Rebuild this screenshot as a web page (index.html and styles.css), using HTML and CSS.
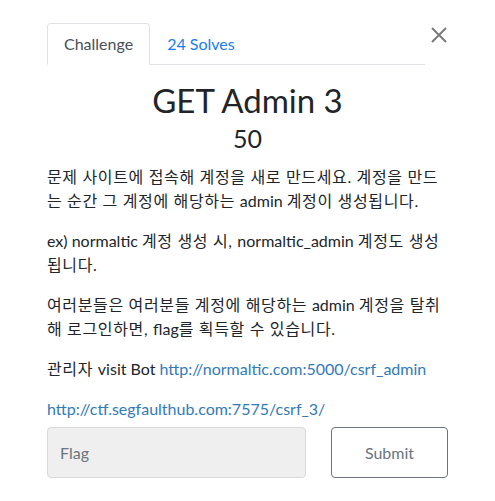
FILE: index.html
```html
<!DOCTYPE html>
<html lang="ko">
<head>
<meta charset="utf-8">
<link rel="stylesheet" href="styles.css">
</head>
<body>
<div class="modal">
  <div class="header">
    <ul class="tabs">
      <li class="tab active">Challenge</li>
      <li class="tab link">24 Solves</li>
    </ul>
    <button class="close" aria-label="Close">
      <svg width="16" height="16" viewBox="0 0 16 16"><path d="M1 1L15 15M15 1L1 15" stroke="#7a7a7a" stroke-width="2"/></svg>
    </button>
  </div>
  <h2 class="title">GET Admin 3</h2>
  <h3 class="value">50</h3>
  <div class="desc">
    <p><span class="ko">문제 사이트에 접속해 계정을 새로 만드세요. 계정을 만드는 순간 그 계정에 해당하는 </span>admin <span class="ko">계정이 생성됩니다.</span></p>
    <p>ex) normaltic <span class="ko">계정 생성 시, </span>normaltic_admin <span class="ko">계정도 생성됩니다.</span></p>
    <p><span class="ko">여러분들은 여러분들 계정에 해당하는 </span>admin <span class="ko">계정을 탈취해 로그인하면, </span>flag<span class="ko">를 획득할 수 있습니다.</span></p>
    <p><span class="ko">관리자 </span>visit Bot <a href="#">http://normaltic.com:5000/csrf_admin</a></p>
    <p><a href="#">http://ctf.segfaulthub.com:7575/csrf_3/</a></p>
  </div>
  <form class="submit-row">
    <input class="flag" type="text" placeholder="Flag">
    <button class="submit" type="button">Submit</button>
  </form>
</div>
</body>
</html>
```

FILE: styles.css
```css
* { box-sizing: border-box; }
body {
  margin: 0;
  background: #fff;
  font-family: Lato, "Noto Sans CJK KR", sans-serif;
  color: #212529;
}
.modal {
  width: 401px;
  margin-left: 47px;
  padding-top: 23px;
}
.header {
  display: flex;
  align-items: flex-start;
}
.tabs {
  flex: 1;
  display: flex;
  list-style: none;
  margin: 0;
  padding: 0;
  border-bottom: 1px solid #dee2e6;
}
.tab {
  font-size: 16px;
  line-height: 24px;
  padding: 8px 16px;
  border: 1px solid transparent;
  border-radius: 4px 4px 0 0;
  margin-bottom: -1px;
}
.tab.active {
  color: #495057;
  border-color: #dee2e6 #dee2e6 #fff;
  background: #fff;
}
.tab.link { color: #1a7cf0; }
.close {
  width: 23px;
  height: 24px;
  padding: 0 0 0 4px;
  margin-top: 0;
  border: 0;
  background: none;
  display: flex;
  align-items: center;
  justify-content: center;
}
.title {
  margin: 15px 0 0;
  text-align: center;
  font-weight: 400;
  font-size: 33px;
  line-height: 40px;
  color: #212529;
}
.value {
  margin: 0;
  text-align: center;
  font-weight: 400;
  font-size: 25px;
  line-height: 36px;
  color: #212529;
}
.desc { margin-top: 9px; }
.desc p {
  margin: 0 0 16px;
  font-size: 16px;
  line-height: 24px;
}
.desc p:last-child { margin-bottom: 0; }
.ko { letter-spacing: 0.65px; }
.desc a { color: #337ab7; text-decoration: none; }
.submit-row {
  display: flex;
  gap: 25px;
  margin-top: 6px;
}
.flag {
  width: 259px;
  height: 51px;
  border: 1px solid #d9d9d9;
  border-radius: 4px;
  background: #efefef;
  padding: 0 12px;
  font-family: Lato, sans-serif;
  font-size: 16px;
  color: #495057;
}
.flag::placeholder { color: #6c757d; }
.submit {
  flex: 1;
  height: 51px;
  border: 1px solid #6c757d;
  border-radius: 4px;
  background: #fff;
  color: #6c757d;
  font-family: Lato, sans-serif;
  font-size: 16px;
}
```
